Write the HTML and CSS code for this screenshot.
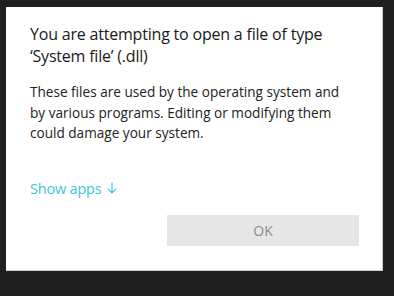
FILE: index.html
```html
<!DOCTYPE html>
<html>
<head>
  <title>Open file</title>
  <link rel="stylesheet" href="styles.css">
</head>
<body>
  <div class="dialog">
    <h1 class="title">You are attempting to open a file of type ‘System file’ (.dll)</h1>
    <p class="message">These files are used by the operating system and by various programs. Editing or modifying them could damage your system.</p>
    <a class="show-apps" href="#">Show apps
      <svg class="arrow" width="10" height="12" viewBox="0 0 10 12">
        <path d="M5 0.5 V11 M0.8 6.8 L5 11 L9.2 6.8" fill="none" stroke="#3ec8da" stroke-width="1.2"/>
      </svg>
    </a>
    <div class="actions">
      <button class="ok-button">OK</button>
    </div>
  </div>
</body>
</html>
```

FILE: styles.css
```css
body {
  margin: 0;
  background-color: #1f1f1f;
  font-family: "Open Sans", "Noto Sans", sans-serif;
  height: 296px;
  overflow: hidden;
}

.dialog {
  box-sizing: border-box;
  width: 377px;
  height: 264px;
  margin: 7px 0 0 6px;
  background-color: #fff;
  border: 1px solid #cfcfcf;
  border-top-color: #fff;
  border-left-color: #fff;
  padding: 15px 23px 0 23px;
  display: flex;
  flex-direction: column;
}

.title {
  margin: 0;
  font-size: 16px;
  font-weight: normal;
  line-height: 22px;
  color: #1a1a1a;
  letter-spacing: -0.2px;
}

.message {
  margin: 15px 0 0 0;
  max-width: 318px;
  font-size: 13.6px;
  line-height: 20.5px;
  color: #222;
}

.show-apps {
  display: flex;
  align-items: center;
  gap: 6px;
  margin-top: 35px;
  font-size: 14.5px;
  color: #3ec8da;
  text-decoration: none;
  letter-spacing: -0.2px;
}

.actions {
  display: flex;
  justify-content: flex-end;
  margin-top: 17px;
}

.ok-button {
  width: 192px;
  height: 31px;
  border: none;
  background-color: #e6e6e6;
  color: #8c8c8c;
  font-family: inherit;
  font-size: 14px;
  padding: 0;
}
```
